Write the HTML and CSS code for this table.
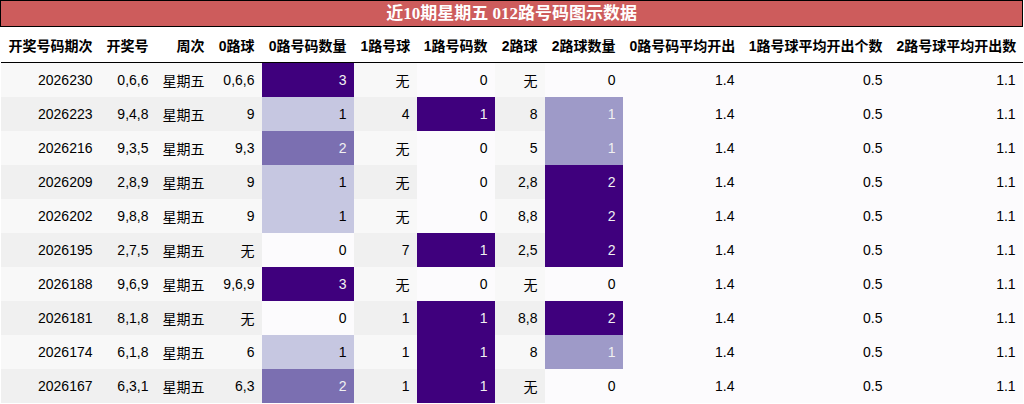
FILE: index.html
```html
<!DOCTYPE html>
<html lang="zh">
<head>
<meta charset="utf-8">
<title>近10期星期五 012路号码图示数据</title>
<link rel="stylesheet" href="styles.css">
</head>
<body>
<table class="data">
  <colgroup>
    <col class="w99"><col class="w56"><col class="w56"><col class="w50"><col class="w92"><col class="w63"><col class="w78"><col class="w50"><col class="w78"><col class="w119"><col class="w148"><col class="w133">
  </colgroup>
  <thead>
    <tr><th class="title" colspan="12">近10期星期五 012路号码图示数据</th></tr>
    <tr class="head">
      <th>开奖号码期次</th><th>开奖号</th><th>周次</th><th>0路球</th><th>0路号码数量</th><th>1路号球</th><th>1路号码数</th><th>2路球</th><th>2路球数量</th><th>0路号码平均开出</th><th>1路号球平均开出个数</th><th>2路号球平均开出数</th>
    </tr>
  </thead>
  <tbody>
    <tr><td>2026230</td><td>0,6,6</td><td>星期五</td><td>0,6,6</td><td class="p3">3</td><td>无</td><td class="p0">0</td><td>无</td><td class="p0">0</td><td class="p0">1.4</td><td class="p0">0.5</td><td class="p0">1.1</td></tr>
    <tr><td>2026223</td><td>9,4,8</td><td>星期五</td><td>9</td><td class="p1">1</td><td>4</td><td class="p3">1</td><td>8</td><td class="ph">1</td><td class="p0">1.4</td><td class="p0">0.5</td><td class="p0">1.1</td></tr>
    <tr><td>2026216</td><td>9,3,5</td><td>星期五</td><td>9,3</td><td class="p2">2</td><td>无</td><td class="p0">0</td><td>5</td><td class="ph">1</td><td class="p0">1.4</td><td class="p0">0.5</td><td class="p0">1.1</td></tr>
    <tr><td>2026209</td><td>2,8,9</td><td>星期五</td><td>9</td><td class="p1">1</td><td>无</td><td class="p0">0</td><td>2,8</td><td class="p3">2</td><td class="p0">1.4</td><td class="p0">0.5</td><td class="p0">1.1</td></tr>
    <tr><td>2026202</td><td>9,8,8</td><td>星期五</td><td>9</td><td class="p1">1</td><td>无</td><td class="p0">0</td><td>8,8</td><td class="p3">2</td><td class="p0">1.4</td><td class="p0">0.5</td><td class="p0">1.1</td></tr>
    <tr><td>2026195</td><td>2,7,5</td><td>星期五</td><td>无</td><td class="p0">0</td><td>7</td><td class="p3">1</td><td>2,5</td><td class="p3">2</td><td class="p0">1.4</td><td class="p0">0.5</td><td class="p0">1.1</td></tr>
    <tr><td>2026188</td><td>9,6,9</td><td>星期五</td><td>9,6,9</td><td class="p3">3</td><td>无</td><td class="p0">0</td><td>无</td><td class="p0">0</td><td class="p0">1.4</td><td class="p0">0.5</td><td class="p0">1.1</td></tr>
    <tr><td>2026181</td><td>8,1,8</td><td>星期五</td><td>无</td><td class="p0">0</td><td>1</td><td class="p3">1</td><td>8,8</td><td class="p3">2</td><td class="p0">1.4</td><td class="p0">0.5</td><td class="p0">1.1</td></tr>
    <tr><td>2026174</td><td>6,1,8</td><td>星期五</td><td>6</td><td class="p1">1</td><td>1</td><td class="p3">1</td><td>8</td><td class="ph">1</td><td class="p0">1.4</td><td class="p0">0.5</td><td class="p0">1.1</td></tr>
    <tr><td>2026167</td><td>6,3,1</td><td>星期五</td><td>6,3</td><td class="p2">2</td><td>1</td><td class="p3">1</td><td>无</td><td class="p0">0</td><td class="p0">1.4</td><td class="p0">0.5</td><td class="p0">1.1</td></tr>
  </tbody>
</table>
</body>
</html>
```

FILE: styles.css
```css
html, body {
  margin: 0;
  padding: 0;
  background: #ffffff;
}

.data {
  width: 1023px;
  table-layout: fixed;
  border-collapse: collapse;
  border-spacing: 0;
  font-family: "Liberation Sans", "Noto Sans CJK SC", sans-serif;
  font-size: 14px;
  color: #000000;
}

.w99 { width: 99px; }
.w56 { width: 56px; }
.w50 { width: 50px; }
.w92 { width: 92px; }
.w63 { width: 63px; }
.w78 { width: 78px; }
.w119 { width: 119px; }
.w148 { width: 148px; }
.w133 { width: 133px; }

.title {
  height: 25px;
  padding: 0;
  background: #cd5c5c;
  border: 1px solid #000000;
  color: #ffffff;
  font-family: "Liberation Serif", "Noto Sans CJK SC", serif;
  font-size: 17px;
  font-weight: bold;
  text-align: center;
  line-height: 25px;
}

.head th {
  height: 35px;
  padding: 0 7px;
  background: #ffffff;
  border-bottom: 1px solid #000000;
  font-weight: bold;
  text-align: right;
  white-space: nowrap;
}

.data td {
  height: 34px;
  padding: 0 7px;
  text-align: right;
  white-space: nowrap;
}

.data tbody tr:nth-child(odd) { background: #f8f8f8; }
.data tbody tr:nth-child(even) { background: #f0f0f0; }

.data td.p0 { background: #fcfbfd; color: #000000; }
.data td.p1 { background: #c6c7e1; color: #000000; }
.data td.ph { background: #9e9ac8; color: #f1f1f1; }
.data td.p2 { background: #7b6fb1; color: #f1f1f1; }
.data td.p3 { background: #3f007d; color: #f1f1f1; }
```
